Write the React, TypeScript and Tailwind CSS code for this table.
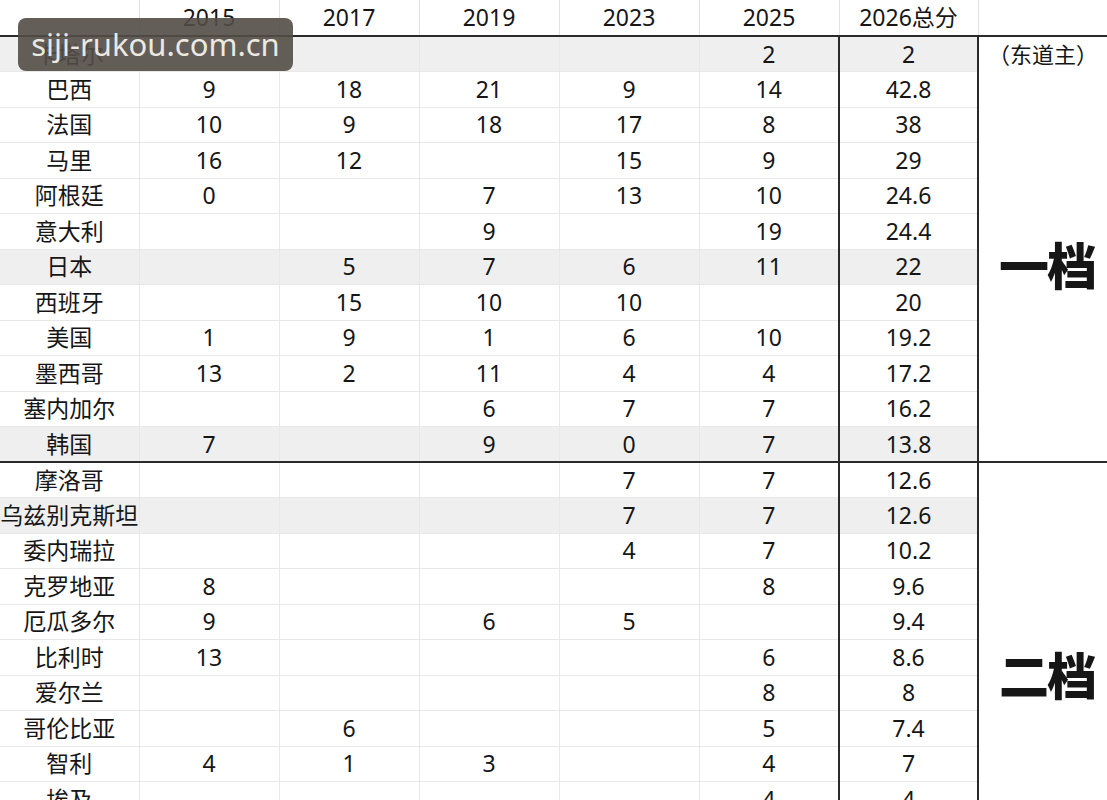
const rows: { name: string; v: string[]; grey?: boolean }[] = [
  { name: "卡塔尔", v: ["", "", "", "", "2", "2"], grey: true },
  { name: "巴西", v: ["9", "18", "21", "9", "14", "42.8"] },
  { name: "法国", v: ["10", "9", "18", "17", "8", "38"] },
  { name: "马里", v: ["16", "12", "", "15", "9", "29"] },
  { name: "阿根廷", v: ["0", "", "7", "13", "10", "24.6"] },
  { name: "意大利", v: ["", "", "9", "", "19", "24.4"] },
  { name: "日本", v: ["", "5", "7", "6", "11", "22"], grey: true },
  { name: "西班牙", v: ["", "15", "10", "10", "", "20"] },
  { name: "美国", v: ["1", "9", "1", "6", "10", "19.2"] },
  { name: "墨西哥", v: ["13", "2", "11", "4", "4", "17.2"] },
  { name: "塞内加尔", v: ["", "", "6", "7", "7", "16.2"] },
  { name: "韩国", v: ["7", "", "9", "0", "7", "13.8"], grey: true },
  { name: "摩洛哥", v: ["", "", "", "7", "7", "12.6"] },
  { name: "乌兹别克斯坦", v: ["", "", "", "7", "7", "12.6"], grey: true },
  { name: "委内瑞拉", v: ["", "", "", "4", "7", "10.2"] },
  { name: "克罗地亚", v: ["8", "", "", "", "8", "9.6"] },
  { name: "厄瓜多尔", v: ["9", "", "6", "5", "", "9.4"] },
  { name: "比利时", v: ["13", "", "", "", "6", "8.6"] },
  { name: "爱尔兰", v: ["", "", "", "", "8", "8"] },
  { name: "哥伦比亚", v: ["", "6", "", "", "5", "7.4"] },
  { name: "智利", v: ["4", "1", "3", "", "4", "7"] },
  { name: "埃及", v: ["", "", "", "", "4", "4"] },
  { name: "", v: ["", "", "", "", "", ""] },
  { name: "", v: ["", "", "", "", "", ""] },
];

const years = ["2015", "2017", "2019", "2023", "2025", "2026总分"];

export default function App() {
  return (
    <div
      className="relative w-[1107px] h-[800px] overflow-hidden bg-white text-[#161616]"
      style={{ fontFamily: '"Noto Sans", "Noto Sans CJK SC", sans-serif' }}
    >
      <table className="border-collapse table-fixed w-[1107px] text-[23px] leading-none">
        <colgroup>
          <col className="w-[139px]" />
          <col className="w-[140px]" />
          <col className="w-[140px]" />
          <col className="w-[140px]" />
          <col className="w-[140px]" />
          <col className="w-[140px]" />
          <col className="w-[139px]" />
          <col className="w-[129px]" />
        </colgroup>
        <thead>
          <tr className="h-[36px] border-b-2 border-b-[#2a2a2a]">
            <th className="border-r border-[#e2e2e2] font-normal"></th>
            {years.map((y) => (
              <th key={y} className="border-r border-[#e2e2e2] font-normal text-center">
                {y}
              </th>
            ))}
            <th className="font-normal"></th>
          </tr>
        </thead>
        <tbody>
          {rows.map((r, i) => (
            <tr
              key={i}
              className={`h-[35.5px] ${i === 11 ? "border-b-2 border-b-[#2a2a2a]" : ""}`}
            >
              <td
                className={`border-r border-b border-[#e8e8e8] text-center whitespace-nowrap overflow-visible ${
                  r.grey ? "bg-[#efefef]" : ""
                }`}
              >
                {r.name}
              </td>
              {r.v.map((c, j) => (
                <td
                  key={j}
                  className={`border-b border-b-[#e8e8e8] text-center ${
                    j === 4 || j === 5
                      ? "border-r-2 border-r-[#2a2a2a]"
                      : "border-r border-r-[#e8e8e8]"
                  } ${r.grey ? "bg-[#efefef]" : ""}`}
                >
                  {c}
                </td>
              ))}
              {i === 0 && (
                <td className="text-center text-[22px]">（东道主）</td>
              )}
              {i === 1 && (
                <td rowSpan={11} className="text-center align-middle">
                  <span className="text-[50px] font-black tracking-[-2px] pl-[8px]">一档</span>
                </td>
              )}
              {i === 12 && (
                <td rowSpan={12} className="text-center align-middle">
                  <span className="text-[50px] font-black tracking-[-2px] pl-[8px]">二档</span>
                </td>
              )}
            </tr>
          ))}
        </tbody>
      </table>

      <div className="absolute left-[18px] top-[18px] w-[275px] h-[53px] rounded-[8px] bg-[#534c47]/90 flex items-center justify-center">
        <span className="text-[31px] text-[#ece8e2] leading-none">
          siji-rukou.com.cn
        </span>
      </div>
    </div>
  );
}
